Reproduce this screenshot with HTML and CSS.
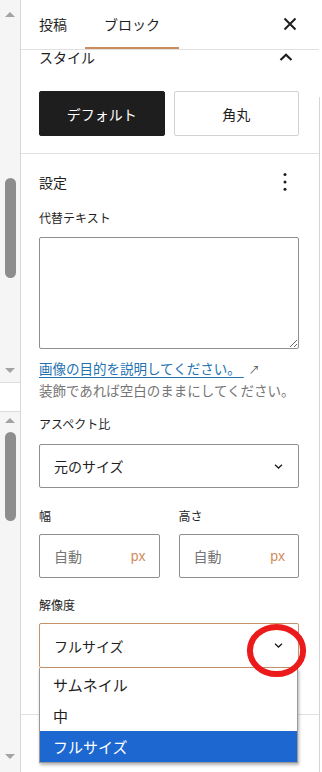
FILE: index.html
```html
<!DOCTYPE html>
<html lang="ja">
<head>
    <title>ブロック設定</title>
    <meta http-equiv="Content-Type" content="text/html; charset=utf-8"/>
    <link rel="stylesheet" href="styles.css">
</head>
<body>
<div class="app">
    <div class="gutter">
        <div class="track track-top">
            <span class="arrow arrow-up"></span>
            <span class="thumb thumb-top"></span>
            <span class="arrow arrow-down"></span>
        </div>
        <div class="track track-bottom">
            <span class="arrow arrow-up"></span>
            <span class="thumb thumb-bottom"></span>
            <span class="arrow arrow-down"></span>
        </div>
    </div>

    <div class="sidebar">
        <div class="tabs">
            <div class="tab tab-post">投稿</div>
            <div class="tab tab-block active">ブロック</div>
            <button class="close" aria-label="閉じる">
                <svg width="24" height="24" viewBox="0 0 24 24"><path d="M6.5 6.5 17.5 17.5M17.5 6.5 6.5 17.5" stroke="#1e1e1e" stroke-width="2" fill="none"/></svg>
            </button>
        </div>

        <div class="panel panel-style">
            <div class="panel-title">
                <span>スタイル</span>
                <svg class="chevron-up" width="14" height="8" viewBox="0 0 14 8"><path d="M1.5 7 7 1.8 12.5 7" stroke="#1e1e1e" stroke-width="2.2" fill="none"/></svg>
            </div>
            <div class="style-options">
                <button class="style-btn selected">デフォルト</button>
                <button class="style-btn">角丸</button>
            </div>
        </div>

        <div class="panel panel-settings">
            <div class="panel-title">
                <span>設定</span>
                <svg class="kebab" width="4" height="18" viewBox="0 0 4 18"><circle cx="2" cy="1.6" r="1.5" fill="#1e1e1e"/><circle cx="2" cy="9" r="1.5" fill="#1e1e1e"/><circle cx="2" cy="16.2" r="1.5" fill="#1e1e1e"/></svg>
            </div>

            <div class="label label-alt">代替テキスト</div>
            <textarea class="alt-text"></textarea>
            <div class="help">
                <a class="help-link" href="#">画像の目的を説明してください。&nbsp;</a><span class="external">↗</span>
                <div class="help-text">装飾であれば空白のままにしてください。</div>
            </div>

            <div class="label label-aspect">アスペクト比</div>
            <div class="select select-aspect">
                <span>元のサイズ</span>
                <svg width="9" height="5" viewBox="0 0 9 5"><path d="M1 0.8 4.5 4 8 0.8" stroke="#1e1e1e" stroke-width="1.3" fill="none"/></svg>
            </div>

            <div class="dimensions">
                <div class="field">
                    <div class="label">幅</div>
                    <div class="unit-input"><span class="placeholder">自動</span><span class="unit">px</span></div>
                </div>
                <div class="field">
                    <div class="label">高さ</div>
                    <div class="unit-input"><span class="placeholder">自動</span><span class="unit">px</span></div>
                </div>
            </div>

            <div class="label label-size">解像度</div>
            <div class="size-wrap">
                <div class="select select-size">
                    <span>フルサイズ</span>
                    <svg width="9" height="5" viewBox="0 0 9 5"><path d="M1 0.8 4.5 4 8 0.8" stroke="#1e1e1e" stroke-width="1.3" fill="none"/></svg>
                </div>
                <ul class="options">
                    <li>サムネイル</li>
                    <li>中</li>
                    <li class="current">フルサイズ</li>
                </ul>
            </div>
        </div>

        <div class="panel panel-next"></div>
    </div>

    <div class="rail"></div>
</div>

<svg class="marker" width="63" height="57" viewBox="0 0 63 57"><ellipse cx="31.5" cy="28.5" rx="26.6" ry="23.6" stroke="#ec1b1b" stroke-width="6" fill="none"/></svg>
</body>
</html>
```

FILE: styles.css
```css
body {
    margin: 0;
    font-family: "Noto Sans CJK JP", "Noto Sans", sans-serif;
    color: #1e1e1e;
    background-color: #fff;
}

.app {
    display: flex;
    width: 322px;
    height: 772px;
    overflow: hidden;
}

/* left scrollbars */

.gutter {
    width: 20px;
    border-right: 1px solid #d8d8d8;
    display: flex;
    flex-direction: column;
}

.track {
    display: flex;
    flex-direction: column;
    align-items: center;
    background-color: #f5f5f5;
}

.track-top {
    height: 383px;
    box-sizing: border-box;
    padding: 12px 0 9px;
    border-bottom: 1px solid #dcdcdc;
}

.track-bottom {
    flex: 1;
    margin-top: 28px;
    padding: 6px 0 13px;
    border-top: 1px solid #dcdcdc;
}

.arrow {
    width: 0;
    height: 0;
    border-left: 5.5px solid transparent;
    border-right: 5.5px solid transparent;
}

.arrow-up {
    border-bottom: 5px solid #a3a3a3;
}

.arrow-down {
    border-top: 5px solid #a3a3a3;
    margin-top: auto;
}

.thumb {
    width: 11px;
    border-radius: 6px;
    background-color: #8d8d8d;
}

.thumb-top {
    margin-top: 161px;
    height: 100px;
}

.thumb-bottom {
    margin-top: 9px;
    height: 89px;
}

/* sidebar */

.sidebar {
    width: 298px;
    display: flex;
    flex-direction: column;
}

.rail {
    width: 2px;
    margin-top: 97px;
    border-left: 1px solid #d4d4d4;
}

.tabs {
    display: flex;
    height: 50px;
    box-sizing: border-box;
    border-bottom: 1px solid #e0e0e0;
}

.tab {
    display: flex;
    align-items: center;
    justify-content: center;
    padding-bottom: 2px;
    font-size: 14px;
}

.tab-post {
    width: 64px;
}

.tab-block {
    width: 94px;
}

.tab.active {
    box-shadow: inset 0 -2px 0 #cf8c5d;
}

.close {
    margin: 12px 17px 0 auto;
    width: 24px;
    height: 24px;
    padding: 0;
    border: 0;
    background: none;
}

.close svg {
    display: block;
}

.panel {
    padding: 0 20px 0 18px;
    border-bottom: 1px solid #e0e0e0;
}

.panel-title {
    display: flex;
    align-items: center;
    justify-content: space-between;
    height: 14px;
    font-size: 14px;
    line-height: 14px;
}

.chevron-up {
    margin-right: 6px;
}

.kebab {
    margin-right: 12px;
}

.panel-style {
    padding-bottom: 17px;
}

.style-options {
    display: grid;
    grid-template-columns: 1fr 1fr;
    column-gap: 9px;
    margin-top: 27px;
}

.style-btn {
    height: 45px;
    font-family: inherit;
    font-size: 14px;
    color: #1e1e1e;
    background-color: #fff;
    border: 1px solid #d2d2d2;
    border-radius: 2px;
}

.style-btn.selected {
    color: #fff;
    background-color: #1e1e1e;
    border-color: #1e1e1e;
}

.panel-settings {
    padding-top: 21px;
    padding-bottom: 46px;
}

.label {
    font-size: 12px;
    line-height: 16px;
}

.label-alt {
    margin-top: 21px;
}

.alt-text {
    display: block;
    margin-top: 11px;
    width: 100%;
    height: 112px;
    box-sizing: border-box;
    border: 1px solid #8f8f8f;
    border-radius: 2px;
    resize: vertical;
}

.help {
    margin-top: 9px;
    font-size: 13.5px;
    line-height: 21px;
}

.help-link {
    color: #2271b1;
    text-underline-offset: 3px;
}

.external {
    margin-left: 5px;
    color: #555;
    font-size: 11px;
}

.help-text {
    color: #757575;
}

.label-aspect {
    margin-top: 15px;
}

.select {
    display: flex;
    align-items: center;
    justify-content: space-between;
    box-sizing: border-box;
    padding: 0 15px 0 14px;
    border: 1px solid #8f8f8f;
    border-radius: 2px;
    font-size: 14px;
}

.select svg {
    display: block;
}

.select-aspect {
    margin-top: 12px;
    height: 44px;
}

.dimensions {
    display: grid;
    grid-template-columns: 1fr 1fr;
    column-gap: 19px;
    margin-top: 20px;
}

.unit-input {
    display: flex;
    align-items: center;
    justify-content: space-between;
    margin-top: 10px;
    height: 44px;
    box-sizing: border-box;
    padding: 0 13px 0 14px;
    border: 1px solid #8f8f8f;
    border-radius: 2px;
    font-size: 14px;
}

.placeholder {
    color: #757575;
}

.unit {
    color: #d08d5e;
    font-family: "Liberation Sans", sans-serif;
}

.label-size {
    margin-top: 19px;
}

.size-wrap {
    position: relative;
    margin-top: 10px;
}

.select-size {
    height: 45px;
    border-color: #c4926b;
}

.options {
    position: absolute;
    top: 100%;
    left: 0;
    right: 1px;
    margin: 0;
    padding: 1px 0 0;
    list-style: none;
    background-color: #fff;
    border: 1px solid #9a9a9a;
    border-top: 0;
    box-shadow: 1px 2px 3px rgba(0, 0, 0, 0.3);
    font-size: 15px;
    z-index: 10;
}

.options li {
    height: 31px;
    line-height: 31px;
    padding-left: 13px;
}

.options li.current {
    color: #fff;
    background-color: #1c67d0;
}

.panel-next {
    flex: 1;
    border-bottom: 0;
}

.marker {
    position: absolute;
    left: 245px;
    top: 622px;
    z-index: 20;
}
```
